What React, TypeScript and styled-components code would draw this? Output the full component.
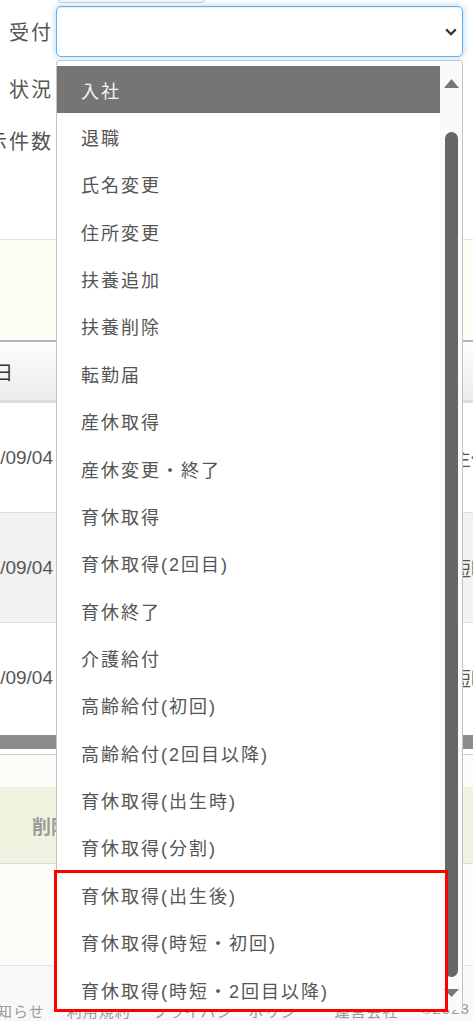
import React from 'react'
import styled, { createGlobalStyle } from 'styled-components'

const GlobalStyle = createGlobalStyle`
    html, body {
        margin: 0;
        padding: 0;
        background: #fff;
    }
    body {
        font-family: "Liberation Sans", "Noto Sans CJK JP", sans-serif;
        overflow: hidden;
    }
`

const Page = styled.div`
    position: relative;
    width: 473px;
    height: 1024px;
    overflow: hidden;
    background: #fff;
    color: #555;
`

const TopStrip = styled.div`
    height: 3px;
    display: flex;
    align-items: flex-end;
    overflow: hidden;
    padding-left: 57px;
`

const TopButton = styled.div`
    flex: none;
    width: 148px;
    height: 30px;
    box-sizing: border-box;
    border: 1px solid #ccc;
    border-radius: 4px;
    background: #f7f7f7;
`

const FieldRow = styled.div<{ $h: number; $top: number }>`
    display: flex;
    align-items: center;
    height: ${({ $h }) => $h}px;
    margin-top: ${({ $top }) => $top}px;
    padding-right: 10px;
`

const Label = styled.div`
    flex: none;
    width: 53px;
    display: flex;
    justify-content: flex-end;
    white-space: nowrap;
    font-size: 20px;
    letter-spacing: 2px;
    color: #555;
`

const Select = styled.div`
    flex: 1;
    height: 51px;
    margin-left: 3px;
    box-sizing: border-box;
    display: flex;
    align-items: center;
    justify-content: flex-end;
    padding-right: 5px;
    border: 1px solid #66afe9;
    border-radius: 5px;
    background: #fff;
    box-shadow: inset 0 1px 1px rgba(0, 0, 0, 0.075), 0 0 7px rgba(102, 175, 233, 0.55);
`

const Spacer = styled.div`
    height: 73px;
`

const FilterPanel = styled.div`
    height: 100px;
    border-top: 1px solid #e0e0e0;
    border-bottom: 2px solid #b5b5b5;
    background: #fbfcf4;
`

const TableHead = styled.div`
    height: 58px;
    display: flex;
    align-items: center;
    border-bottom: 3px solid #dcdcdc;
    background: linear-gradient(#fdfdfd, #ececec);
`

const DateCell = styled.div<{ $w: number }>`
    flex: none;
    width: ${({ $w }) => $w}px;
    display: flex;
    justify-content: flex-end;
    white-space: nowrap;
    font-size: 19px;
`

const HeadText = styled.span`
    color: #333;
`

const TableRow = styled.div<{ $striped?: boolean }>`
    height: 109px;
    display: flex;
    align-items: center;
    border-top: 1px solid #dedede;
    background: ${({ $striped }) => ($striped ? '#f2f2f2' : '#fff')};
    &:first-of-type {
        border-top: none;
    }
`

const SideCell = styled.div`
    margin-left: auto;
    width: 21px;
    white-space: nowrap;
    font-size: 19px;
    color: #555;
`

const Rows = styled.div`
    display: flex;
    flex-direction: column;
`

const HScroll = styled.div`
    height: 14px;
    margin-top: 3px;
    background: #8c8c8c;
`

const HScrollBorder = styled.div`
    height: 5px;
    border-bottom: 1px solid #c8c8c8;
`

const Blank = styled.div<{ $h: number }>`
    height: ${({ $h }) => $h}px;
    background: #fcfdf8;
`

const GreenBand = styled.div`
    height: 76px;
    display: flex;
    align-items: center;
    padding-left: 32px;
    border-bottom: 1px solid #dcdcdc;
    background: #eef4df;
    font-size: 19px;
    font-weight: bold;
    color: #9a9a9a;
    white-space: nowrap;
`

const Footer = styled.div`
    height: 56px;
    border-top: 1px solid #e3e3e3;
    background: #f8f8f8;
    padding-top: 34px;
    box-sizing: border-box;
`

const FooterLinks = styled.div`
    display: flex;
    gap: 22px;
    margin-left: -19px;
    white-space: nowrap;
    font-size: 15px;
    letter-spacing: 1px;
    color: #999;
`

const Dropdown = styled.div`
    position: absolute;
    left: 56px;
    top: 60px;
    width: 407px;
    height: 950px;
    box-sizing: border-box;
    display: flex;
    border: 1px solid #c4c4c4;
    border-bottom: none;
    border-radius: 4px 4px 0 0;
    background: #fff;
    overflow: hidden;
`

const OptionList = styled.div`
    flex: 1;
    padding-top: 5px;
    display: flex;
    flex-direction: column;
`

const Option = styled.div<{ $active?: boolean }>`
    flex: none;
    height: 47.37px;
    display: flex;
    align-items: center;
    padding-left: 24px;
    white-space: nowrap;
    font-size: 18px;
    letter-spacing: 2px;
    color: ${({ $active }) => ($active ? '#f4f4f4' : '#555')};
    background: ${({ $active }) => ($active ? '#757575' : 'transparent')};
`

const ScrollTrack = styled.div`
    flex: none;
    width: 22px;
    display: flex;
    flex-direction: column;
    align-items: center;
    background: #fafafa;
`

const Arrow = styled.svg<{ $top: number }>`
    display: block;
    flex: none;
    margin-top: ${({ $top }) => $top}px;
`

const Thumb = styled.div`
    flex: none;
    width: 13px;
    height: 845px;
    margin-top: 44px;
    border-radius: 7px;
    background: #666;
`

const Highlight = styled.div`
    position: absolute;
    left: 54px;
    top: 870px;
    width: 394px;
    height: 142px;
    box-sizing: border-box;
    border: 3px solid #ff0000;
`

const options = [
    '入社',
    '退職',
    '氏名変更',
    '住所変更',
    '扶養追加',
    '扶養削除',
    '転勤届',
    '産休取得',
    '産休変更・終了',
    '育休取得',
    '育休取得(2回目)',
    '育休終了',
    '介護給付',
    '高齢給付(初回)',
    '高齢給付(2回目以降)',
    '育休取得(出生時)',
    '育休取得(分割)',
    '育休取得(出生後)',
    '育休取得(時短・初回)',
    '育休取得(時短・2回目以降)',
]

const rows = [
    { date: '2023/09/04', side: '主任' },
    { date: '2023/09/04', side: '短時' },
    { date: '2023/09/04', side: '短時' },
]

export default function App() {
    return (
        <Page>
            <GlobalStyle />
            <TopStrip>
                <TopButton />
            </TopStrip>

            <FieldRow $h={51} $top={3}>
                <Label>受付</Label>
                <Select>
                    <svg width="12" height="8" viewBox="0 0 12 8">
                        <path d="M1.2 1.4 L6 6.2 L10.8 1.4" fill="none" stroke="#333" strokeWidth="2.2" />
                    </svg>
                </Select>
            </FieldRow>
            <FieldRow $h={52} $top={5}>
                <Label>状況</Label>
            </FieldRow>
            <FieldRow $h={52} $top={0}>
                <Label>表示件数</Label>
            </FieldRow>

            <Spacer />
            <FilterPanel />

            <TableHead>
                <DateCell $w={13}>
                    <HeadText>申請日</HeadText>
                </DateCell>
            </TableHead>

            <Rows>
                {rows.map((r, i) => (
                    <TableRow key={i} $striped={i === 1}>
                        <DateCell $w={53}>{r.date}</DateCell>
                        <SideCell>{r.side}</SideCell>
                    </TableRow>
                ))}
            </Rows>

            <HScroll />
            <HScrollBorder />
            <Blank $h={32} />
            <GreenBand>削除</GreenBand>
            <Blank $h={101} />

            <Footer>
                <FooterLinks>
                    <span>お知らせ</span>
                    <span>利用規約</span>
                    <span>プライバシーポリシー</span>
                    <span>運営会社</span>
                    <span>©2023</span>
                </FooterLinks>
            </Footer>

            <Dropdown>
                <OptionList>
                    {options.map((o, i) => (
                        <Option key={o} $active={i === 0}>
                            {o}
                        </Option>
                    ))}
                </OptionList>
                <ScrollTrack>
                    <Arrow $top={18} width="15" height="9" viewBox="0 0 15 9">
                        <polygon points="7.5,0 15,9 0,9" fill="#777" />
                    </Arrow>
                    <Thumb />
                    <Arrow $top={12} width="15" height="8" viewBox="0 0 15 8">
                        <polygon points="0,0 15,0 7.5,8" fill="#777" />
                    </Arrow>
                </ScrollTrack>
            </Dropdown>

            <Highlight />
        </Page>
    )
}
